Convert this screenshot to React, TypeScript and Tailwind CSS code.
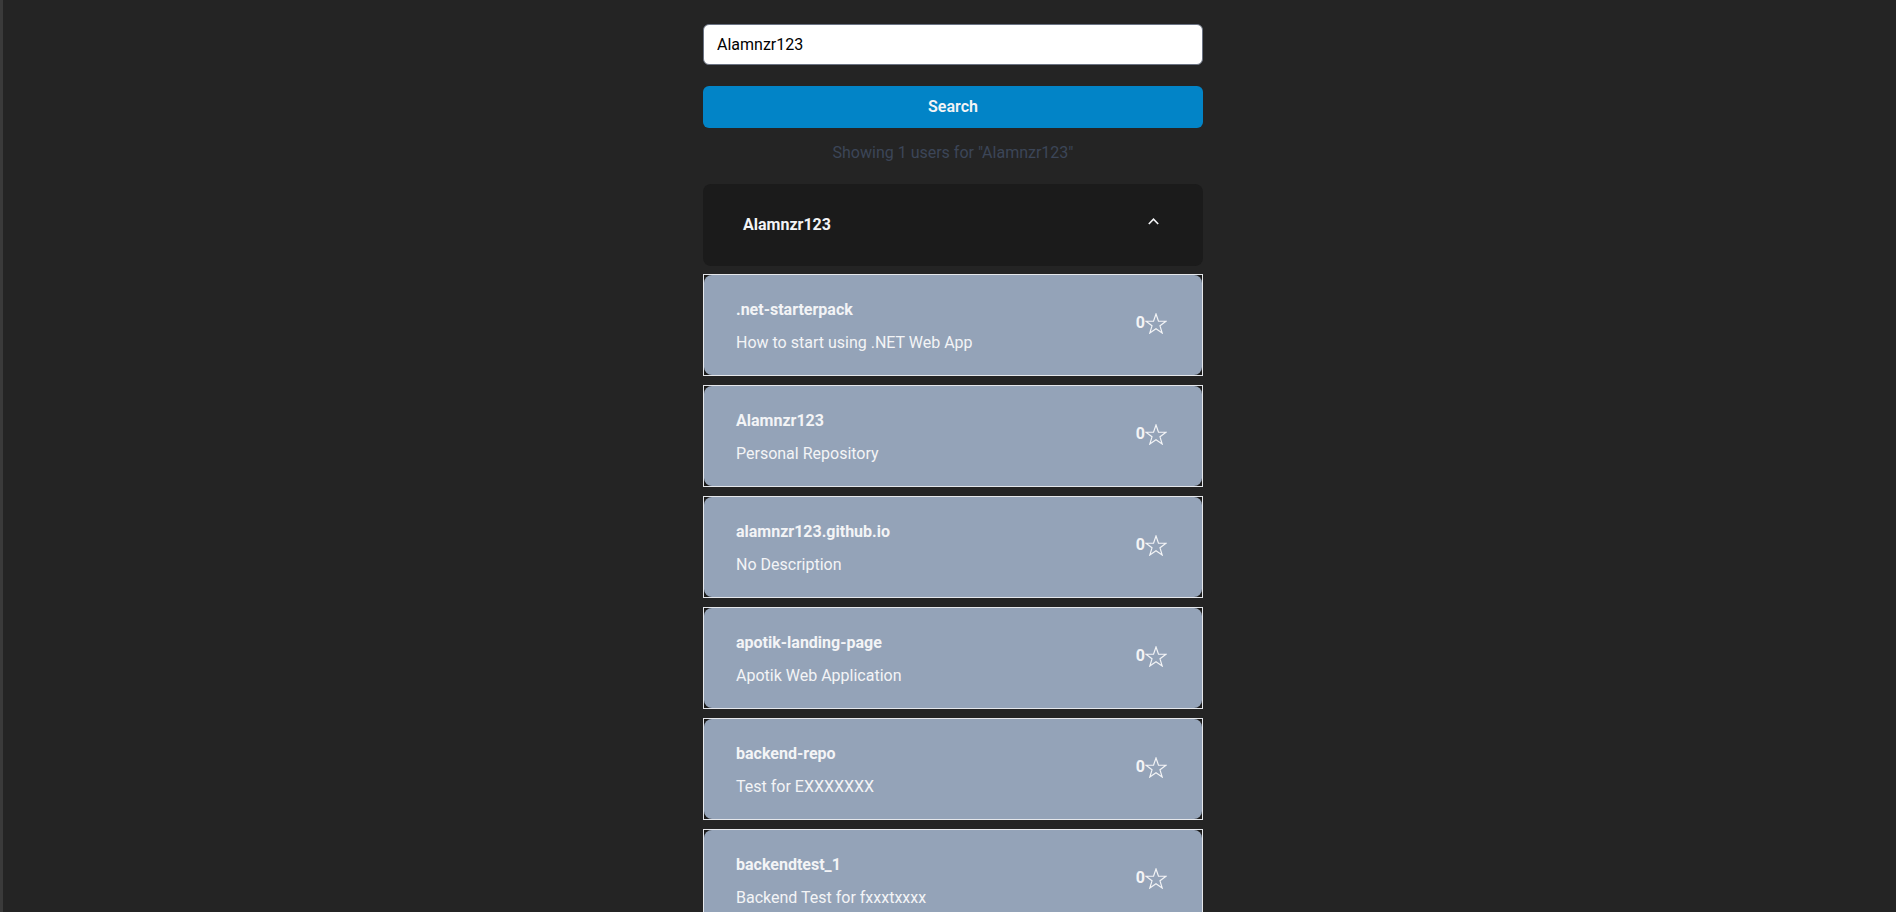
import React from "react";

const repos = [
  { name: ".net-starterpack", desc: "How to start using .NET Web App" },
  { name: "Alamnzr123", desc: "Personal Repository" },
  { name: "alamnzr123.github.io", desc: "No Description" },
  { name: "apotik-landing-page", desc: "Apotik Web Application" },
  { name: "backend-repo", desc: "Test for EXXXXXXX" },
  { name: "backendtest_1", desc: "Backend Test for fxxxtxxxx" },
];

const FONT = 'Roboto, "Noto Sans", sans-serif';

function Star() {
  return (
    <svg width="22" height="21" viewBox="0 0 22 21" fill="none" stroke="#f3f4f6" strokeWidth="1.2" strokeLinejoin="miter">
      <polygon points="11,1 13.47,8.1 20.99,8.26 15,12.8 17.17,20 11,15.7 4.83,20 7,12.8 1.01,8.26 8.53,8.1" />
    </svg>
  );
}

export default function App() {
  return (
    <div className="min-h-screen bg-[#242424] border-l-[3px] border-[#3a3a3a] pl-[7px]" style={{ fontFamily: FONT }}>
      <div className="w-[500px] mx-auto pt-[24px] flex flex-col">
        <input
          readOnly
          value="Alamnzr123"
          className="h-[41px] w-full rounded-md border border-gray-500 bg-white px-[13px] text-[16px] text-black outline-none"
        />
        <button className="mt-[21px] h-[42px] w-full rounded-md bg-[#0284c7] text-[16px] font-semibold text-gray-100">
          Search
        </button>
        <p className="mt-[13px] text-center text-[16px] leading-6 text-[#3c4658]">Showing 1 users for "Alamnzr123"</p>
        <div className="mt-[19px] h-[82px] rounded-lg bg-[#1b1b1b] flex items-center justify-between pl-[40px] pr-[44px]">
          <span className="text-[16px] font-bold text-gray-100">Alamnzr123</span>
          <svg width="11" height="7" viewBox="0 0 11 7" fill="none" stroke="#f3f4f6" strokeWidth="1.6" className="-mt-[8px]">
            <polyline points="0.8,6 5.5,1.2 10.2,6" />
          </svg>
        </div>
        <div className="mt-[8px] flex flex-col gap-[9px]">
          {repos.map((r) => (
            <div key={r.name} className="border border-gray-200 bg-[#1c1c1c]">
              <div className="h-[100px] rounded-lg bg-[#94a3b8] flex items-center justify-between pl-[32px] pr-[35px]">
                <div className="flex flex-col gap-[9px] mt-[2px]">
                  <span className="text-[16px] leading-6 font-bold text-gray-100">{r.name}</span>
                  <span className="text-[16px] leading-6 text-gray-100">{r.desc}</span>
                </div>
                <div className="flex items-center -mt-[4px]">
                  <span className="text-[16px] font-bold text-gray-100">0</span>
                  <Star />
                </div>
              </div>
            </div>
          ))}
        </div>
      </div>
    </div>
  );
}
